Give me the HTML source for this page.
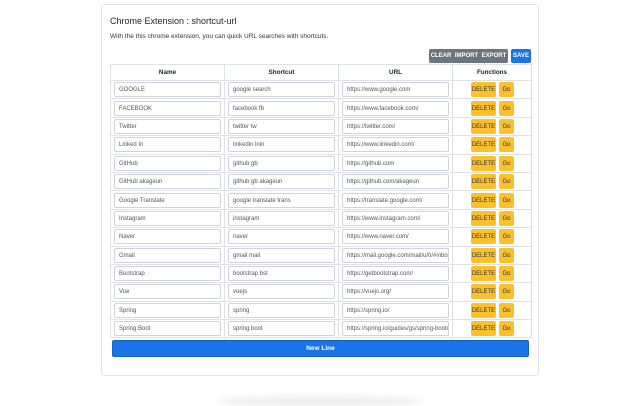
<!DOCTYPE html>
<html><head><style>
*{box-sizing:border-box;margin:0;padding:0}
body{width:640px;height:400px;background:#fff;font-family:"Liberation Sans",sans-serif;position:relative;overflow:hidden;color:#212529}
.card{position:absolute;left:101px;top:4px;width:438px;height:372px;border:1px solid #e3e3e3;border-radius:3px;background:#fff}
.t{position:absolute;left:8px;top:11px;font-size:9px}
.d{position:absolute;left:8px;top:28px;font-size:6.5px;color:#333}
.bg{position:absolute;left:327px;top:44px;width:79px;height:14px;background:#6c757d;border-radius:2px;color:#fff;font-size:6px;font-weight:bold;display:flex;justify-content:space-around;align-items:center}
.sv{position:absolute;left:409px;top:44px;width:20px;height:14px;background:#1a73e8;border-radius:2px;color:#fff;font-size:6px;font-weight:bold;display:flex;justify-content:center;align-items:center}
table{position:absolute;left:8px;top:59px;width:421px;border-collapse:collapse;font-size:6.3px;table-layout:fixed}
th{height:16px;border:1px solid #dee2e6;font-weight:bold;text-align:center}
td{height:18.4px;border:1px solid #dee2e6;padding:0 3px;font-size:6px}
.i{height:15px;border:1px solid #ced4da;border-radius:2px;padding:4px 0 0 4px;line-height:7px;color:#555;white-space:nowrap;overflow:hidden}
.fx{position:relative;height:15px;margin-left:15px}
.b{position:absolute;top:0;background:#fbc02d;color:#333;height:15px;border-radius:2px;font-size:6px;text-align:center}
.b span{position:absolute;left:0;right:0;top:5px;line-height:6px}
.nl{position:absolute;left:10px;top:335px;width:417px;height:17px;background:#1a73e8;border:1px solid #1565c0;border-radius:2px;color:#fff;font-size:6.5px;font-weight:bold;text-align:center;line-height:15px}
.sh{position:absolute;left:215px;top:396px;width:210px;height:10px;border-radius:50%;background:#eee;filter:blur(3px)}
</style></head><body>
<div class="sh"></div>
<div class="card">
<div class="t">Chrome Extension : shortcut-url</div>
<div class="d">With the this chrome extension, you can quick URL searches with shortcuts.</div>
<div class="bg"><span>CLEAR</span><span>IMPORT</span><span>EXPORT</span></div>
<div class="sv">SAVE</div>
<table>
<colgroup><col style="width:114px"><col style="width:114px"><col style="width:114px"><col style="width:79px"></colgroup>
<tr><th>Name</th><th>Shortcut</th><th>URL</th><th>Functions</th></tr>
<tr><td><div class="i">GOOGLE</div></td><td><div class="i">google search</div></td><td><div class="i">https://www.google.com</div></td><td><div class="fx"><div class="b" style="left:0;width:25px"><span>DELETE</span></div><div class="b" style="left:28px;width:15px"><span>Go</span></div></div></td></tr>
<tr><td><div class="i">FACEBOOK</div></td><td><div class="i">facebook fb</div></td><td><div class="i">https://www.facebook.com/</div></td><td><div class="fx"><div class="b" style="left:0;width:25px"><span>DELETE</span></div><div class="b" style="left:28px;width:15px"><span>Go</span></div></div></td></tr>
<tr><td><div class="i">Twitter</div></td><td><div class="i">twitter tw</div></td><td><div class="i">https://twitter.com/</div></td><td><div class="fx"><div class="b" style="left:0;width:25px"><span>DELETE</span></div><div class="b" style="left:28px;width:15px"><span>Go</span></div></div></td></tr>
<tr><td><div class="i">Linked In</div></td><td><div class="i">linkedin lnin</div></td><td><div class="i">https://www.linkedin.com/</div></td><td><div class="fx"><div class="b" style="left:0;width:25px"><span>DELETE</span></div><div class="b" style="left:28px;width:15px"><span>Go</span></div></div></td></tr>
<tr><td><div class="i">GitHub</div></td><td><div class="i">github gb</div></td><td><div class="i">https://github.com</div></td><td><div class="fx"><div class="b" style="left:0;width:25px"><span>DELETE</span></div><div class="b" style="left:28px;width:15px"><span>Go</span></div></div></td></tr>
<tr><td><div class="i">GitHub akageun</div></td><td><div class="i">github gb akageun</div></td><td><div class="i">https://github.com/akageun</div></td><td><div class="fx"><div class="b" style="left:0;width:25px"><span>DELETE</span></div><div class="b" style="left:28px;width:15px"><span>Go</span></div></div></td></tr>
<tr><td><div class="i">Google Translate</div></td><td><div class="i">google translate trans</div></td><td><div class="i">https://translate.google.com/</div></td><td><div class="fx"><div class="b" style="left:0;width:25px"><span>DELETE</span></div><div class="b" style="left:28px;width:15px"><span>Go</span></div></div></td></tr>
<tr><td><div class="i">Instagram</div></td><td><div class="i">instagram</div></td><td><div class="i">https://www.instagram.com/</div></td><td><div class="fx"><div class="b" style="left:0;width:25px"><span>DELETE</span></div><div class="b" style="left:28px;width:15px"><span>Go</span></div></div></td></tr>
<tr><td><div class="i">Naver</div></td><td><div class="i">naver</div></td><td><div class="i">https://www.naver.com/</div></td><td><div class="fx"><div class="b" style="left:0;width:25px"><span>DELETE</span></div><div class="b" style="left:28px;width:15px"><span>Go</span></div></div></td></tr>
<tr><td><div class="i">Gmail</div></td><td><div class="i">gmail mail</div></td><td><div class="i">https://mail.google.com/mail/u/0/#inbox</div></td><td><div class="fx"><div class="b" style="left:0;width:25px"><span>DELETE</span></div><div class="b" style="left:28px;width:15px"><span>Go</span></div></div></td></tr>
<tr><td><div class="i">Bootstrap</div></td><td><div class="i">bootstrap bst</div></td><td><div class="i">https://getbootstrap.com/</div></td><td><div class="fx"><div class="b" style="left:0;width:25px"><span>DELETE</span></div><div class="b" style="left:28px;width:15px"><span>Go</span></div></div></td></tr>
<tr><td><div class="i">Vue</div></td><td><div class="i">vuejs</div></td><td><div class="i">https://vuejs.org/</div></td><td><div class="fx"><div class="b" style="left:0;width:25px"><span>DELETE</span></div><div class="b" style="left:28px;width:15px"><span>Go</span></div></div></td></tr>
<tr><td><div class="i">Spring</div></td><td><div class="i">spring</div></td><td><div class="i">https://spring.io/</div></td><td><div class="fx"><div class="b" style="left:0;width:25px"><span>DELETE</span></div><div class="b" style="left:28px;width:15px"><span>Go</span></div></div></td></tr>
<tr><td><div class="i">Spring Boot</div></td><td><div class="i">spring boot</div></td><td><div class="i">https://spring.io/guides/gs/spring-boot/</div></td><td><div class="fx"><div class="b" style="left:0;width:25px"><span>DELETE</span></div><div class="b" style="left:28px;width:15px"><span>Go</span></div></div></td></tr>
</table>
<div class="nl">New Line</div>
</div>
</body></html>
